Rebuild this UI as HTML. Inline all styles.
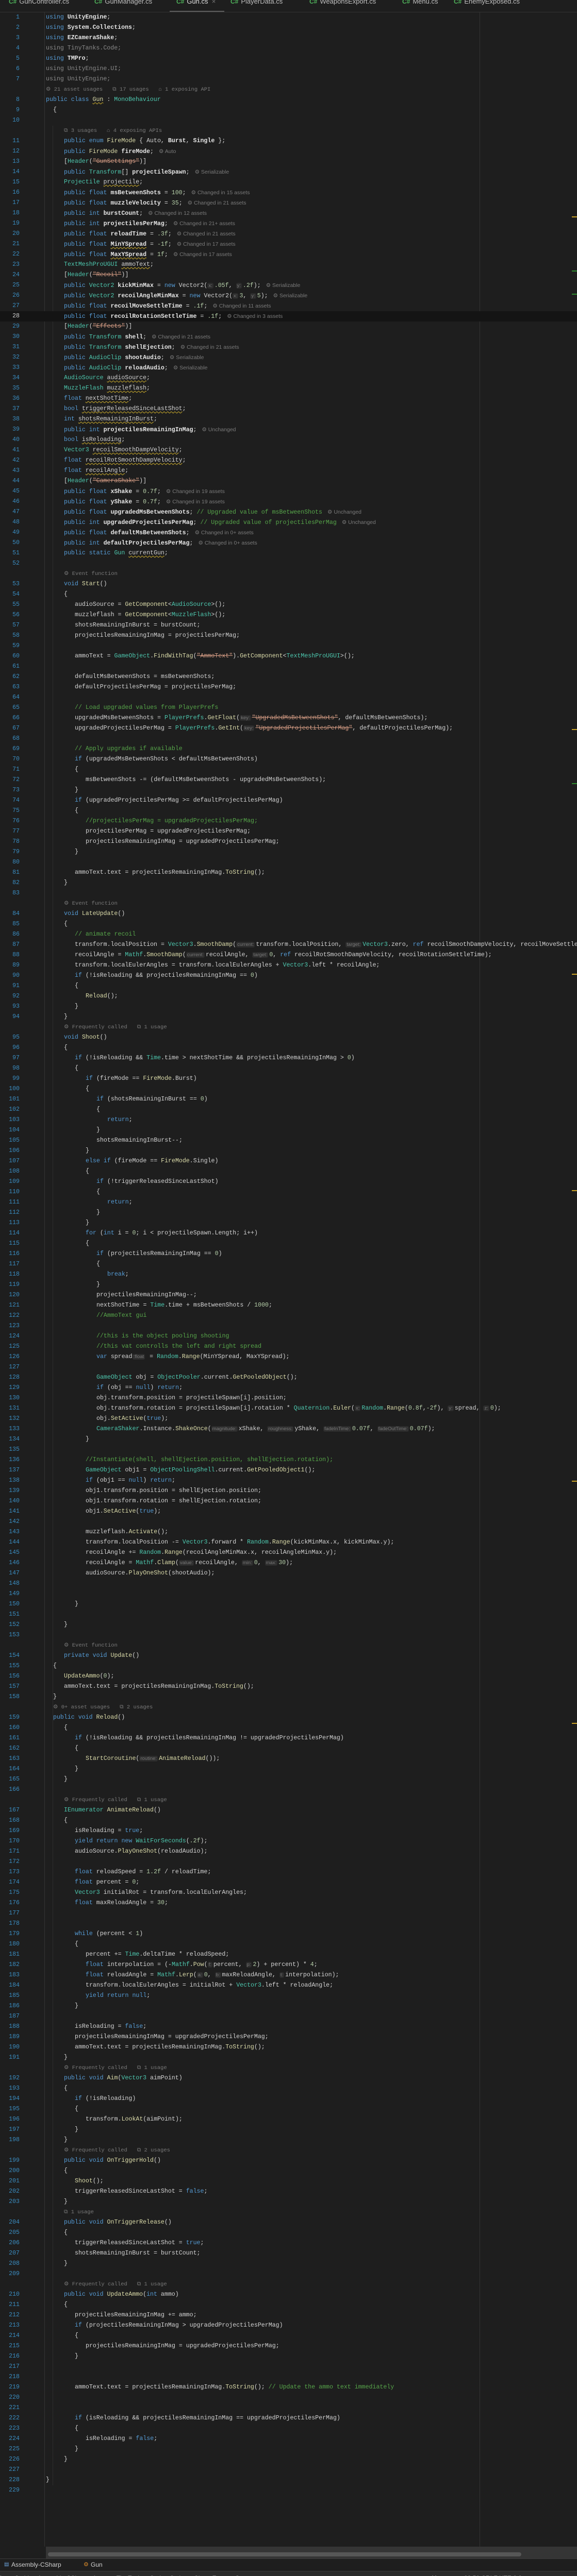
<!DOCTYPE html>
<html><head><meta charset="utf-8">
<style>
*{margin:0;padding:0;box-sizing:border-box}
html,body{width:1119px;height:5019px;background:#1e1e1e;overflow:hidden}
#root{position:relative;width:1119px;height:5019px;overflow:hidden;font-family:"Liberation Mono",monospace;font-size:11.6px;color:#d4d4d4;line-height:20px}
#tabs{position:absolute;left:0;top:0;width:1119px;height:24px;background:#1e1e1e;border-bottom:1px solid #333;font-family:"Liberation Sans",sans-serif;font-size:13px;color:#bfbfbf;overflow:hidden}
#tabs span{position:absolute;top:-7px;white-space:nowrap;line-height:20px}
#tabs span b{color:#4fb05a;font-weight:bold;font-size:12px;margin-right:5px}
#tabs .ul{position:absolute;left:329px;top:21px;width:106px;height:3px;background:#5c5c5c}
#ed{position:absolute;left:0;top:24px;width:1119px;height:4919px;overflow:hidden}
.r{position:relative;height:20px;line-height:20px;white-space:pre;overflow:hidden}
.r i{position:absolute;left:0;top:0;width:38px;text-align:right;font-style:normal;color:#3a8cc0}
.r code{position:absolute;top:0;font-family:inherit;white-space:pre;line-height:20px}
.L0{left:89px}.L1{left:103px}.L2{left:124px}.L3{left:145px}.L4{left:166px}.L5{left:187px}.L6{left:208px}
.cur{background:#141414}
k{color:#569cd6}t{color:#4ec9b0}m{color:#dcdcaa}s{color:#d69d85}c{color:#57a64a}n{color:#b5cea8}
b{color:#e6e6e6;font-weight:bold}
.dim{color:#8a8a8a}
h{font-family:"Liberation Sans",sans-serif;font-size:10.5px;color:#7a7a7a;margin-left:10px}
.hint{font-family:"Liberation Sans",sans-serif;font-size:10.5px;color:#7a7a7a}
em{font-style:normal;font-family:"Liberation Sans",sans-serif;font-size:9.5px;color:#777;background:#2d2d2d;border-radius:3px;padding:0 2px;margin-right:2px}
u{text-decoration:underline wavy #b59a2a;text-underline-offset:2px}
.vl{position:absolute;width:1px;background:#333}
#hs{position:absolute;left:89px;top:4943px;width:1030px;height:23px;background:#353535;overflow:hidden}
#hs div{position:absolute;left:4px;top:11px;width:918px;height:8px;border-radius:4px;background:#575757}
#asm{position:absolute;left:0;top:4966px;width:1119px;height:24px;background:#1e1e1e;border-top:1px solid #3a3a3a;font-family:"Liberation Sans",sans-serif;font-size:12px;color:#cfcfcf;line-height:22px;overflow:hidden}
#asm span{position:absolute;top:0}
#st{position:absolute;left:0;top:4990px;width:1119px;height:28px;background:#2b2b2b;border-top:1px solid #3a3a3a;font-family:"Liberation Sans",sans-serif;font-size:12px;color:#b0b0b0;line-height:26px;white-space:nowrap;overflow:hidden}
#st>span{position:absolute;top:0}
.mk{position:absolute;left:1109px;width:10px;height:2px}
</style></head><body><div id="root">
<div id="tabs">
<span style="left:17px"><b>C#</b>GunController.cs</span>
<span style="left:183px"><b>C#</b>GunManager.cs</span>
<span style="left:342px;color:#e0e0e0"><b>C#</b>Gun.cs&nbsp;&nbsp;<span style="position:static;color:#777">×</span></span>
<span style="left:447px"><b>C#</b>PlayerData.cs</span>
<span style="left:600px"><b>C#</b>WeaponsExport.cs</span>
<span style="left:780px"><b>C#</b>Menu.cs</span>
<span style="left:880px"><b>C#</b>EnemyExposed.cs</span>
<div class="ul"></div>
</div>
<div class="vl" style="left:86px;top:24px;height:4919px"></div>
<div class="vl" style="left:930px;top:24px;height:4919px"></div>
<div class="vl" style="left:102px;top:244px;height:4580px;background:#2e2e2e"></div>
<div id="ed">
<div class="r"><i>1</i><code class="L0"><k>using</k> <b>UnityEngine</b>;</code></div>
<div class="r"><i>2</i><code class="L0"><k>using</k> <b>System.Collections</b>;</code></div>
<div class="r"><i>3</i><code class="L0"><k>using</k> <b>EZCameraShake</b>;</code></div>
<div class="r"><i>4</i><code class="L0 dim">using TinyTanks.Code;</code></div>
<div class="r"><i>5</i><code class="L0"><k>using</k> <b>TMPro</b>;</code></div>
<div class="r"><i>6</i><code class="L0 dim">using UnityEngine.UI;</code></div>
<div class="r"><i>7</i><code class="L0 dim">using UnityEngine;</code></div>
<div class="r"><i></i><code class="L0 hint">⚙ 21 asset usages   ⧉ 17 usages   ⌂ 1 exposing API</code></div>
<div class="r"><i>8</i><code class="L0"><k>public</k> <k>class</k> <m><u>Gun</u></m> : <t>MonoBehaviour</t></code></div>
<div class="r"><i>9</i><code class="L1">{</code></div>
<div class="r"><i>10</i></div>
<div class="r"><i></i><code class="L2 hint">⧉ 3 usages   ⌂ 4 exposing APIs</code></div>
<div class="r"><i>11</i><code class="L2"><k>public</k> <k>enum</k> <m>FireMode</m> { Auto, <b>Burst</b>, <b>Single</b> };</code></div>
<div class="r"><i>12</i><code class="L2"><k>public</k> <m>FireMode</m> <b>fireMode</b>;<h>⚙ Auto</h></code></div>
<div class="r"><i>13</i><code class="L2">[<t>Header</t>(<s>"GunSettings"</s>)]</code></div>
<div class="r"><i>14</i><code class="L2"><k>public</k> <t>Transform</t>[] <b>projectileSpawn</b>;<h>⚙ Serializable</h></code></div>
<div class="r"><i>15</i><code class="L2"><t>Projectile</t> <u>projectile</u>;</code></div>
<div class="r"><i>16</i><code class="L2"><k>public</k> <k>float</k> <b>msBetweenShots</b> = <n>100</n>;<h>⚙ Changed in 15 assets</h></code></div>
<div class="r"><i>17</i><code class="L2"><k>public</k> <k>float</k> <b>muzzleVelocity</b> = <n>35</n>;<h>⚙ Changed in 21 assets</h></code></div>
<div class="r"><i>18</i><code class="L2"><k>public</k> <k>int</k> <b>burstCount</b>;<h>⚙ Changed in 12 assets</h></code></div>
<div class="r"><i>19</i><code class="L2"><k>public</k> <k>int</k> <b>projectilesPerMag</b>;<h>⚙ Changed in 21+ assets</h></code></div>
<div class="r"><i>20</i><code class="L2"><k>public</k> <k>float</k> <b>reloadTime</b> = <n>.3f</n>;<h>⚙ Changed in 21 assets</h></code></div>
<div class="r"><i>21</i><code class="L2"><k>public</k> <k>float</k> <b><u>MinYSpread</u></b> = <n>-1f</n>;<h>⚙ Changed in 17 assets</h></code></div>
<div class="r"><i>22</i><code class="L2"><k>public</k> <k>float</k> <b><u>MaxYSpread</u></b> = <n>1f</n>;<h>⚙ Changed in 17 assets</h></code></div>
<div class="r"><i>23</i><code class="L2"><t>TextMeshProUGUI</t> <u>ammoText</u>;</code></div>
<div class="r"><i>24</i><code class="L2">[<t>Header</t>(<s>"Recoil"</s>)]</code></div>
<div class="r"><i>25</i><code class="L2"><k>public</k> <t>Vector2</t> <b>kickMinMax</b> = <k>new</k> Vector2(<em>x:</em><n>.05f</n>, <em>y:</em><n>.2f</n>);<h>⚙ Serializable</h></code></div>
<div class="r"><i>26</i><code class="L2"><k>public</k> <t>Vector2</t> <b>recoilAngleMinMax</b> = <k>new</k> Vector2(<em>x:</em><n>3</n>, <em>y:</em><n>5</n>);<h>⚙ Serializable</h></code></div>
<div class="r"><i>27</i><code class="L2"><k>public</k> <k>float</k> <b>recoilMoveSettleTime</b> = <n>.1f</n>;<h>⚙ Changed in 11 assets</h></code></div>
<div class="r cur"><i style="color:#cfcfcf">28</i><code class="L2"><k>public</k> <k>float</k> <b>recoilRotationSettleTime</b> = <n>.1f</n>;<h>⚙ Changed in 3 assets</h></code></div>
<div class="r"><i>29</i><code class="L2">[<t>Header</t>(<s>"Effects"</s>)]</code></div>
<div class="r"><i>30</i><code class="L2"><k>public</k> <t>Transform</t> <b>shell</b>;<h>⚙ Changed in 21 assets</h></code></div>
<div class="r"><i>31</i><code class="L2"><k>public</k> <t>Transform</t> <b>shellEjection</b>;<h>⚙ Changed in 21 assets</h></code></div>
<div class="r"><i>32</i><code class="L2"><k>public</k> <t>AudioClip</t> <b>shootAudio</b>;<h>⚙ Serializable</h></code></div>
<div class="r"><i>33</i><code class="L2"><k>public</k> <t>AudioClip</t> <b>reloadAudio</b>;<h>⚙ Serializable</h></code></div>
<div class="r"><i>34</i><code class="L2"><t>AudioSource</t> <u>audioSource</u>;</code></div>
<div class="r"><i>35</i><code class="L2"><t>MuzzleFlash</t> <u>muzzleflash</u>;</code></div>
<div class="r"><i>36</i><code class="L2"><k>float</k> <u>nextShotTime</u>;</code></div>
<div class="r"><i>37</i><code class="L2"><k>bool</k> <u>triggerReleasedSinceLastShot</u>;</code></div>
<div class="r"><i>38</i><code class="L2"><k>int</k> <u>shotsRemainingInBurst</u>;</code></div>
<div class="r"><i>39</i><code class="L2"><k>public</k> <k>int</k> <b>projectilesRemainingInMag</b>;<h>⚙ Unchanged</h></code></div>
<div class="r"><i>40</i><code class="L2"><k>bool</k> <u>isReloading</u>;</code></div>
<div class="r"><i>41</i><code class="L2"><t>Vector3</t> <u>recoilSmoothDampVelocity</u>;</code></div>
<div class="r"><i>42</i><code class="L2"><k>float</k> <u>recoilRotSmoothDampVelocity</u>;</code></div>
<div class="r"><i>43</i><code class="L2"><k>float</k> <u>recoilAngle</u>;</code></div>
<div class="r"><i>44</i><code class="L2">[<t>Header</t>(<s>"CameraShake"</s>)]</code></div>
<div class="r"><i>45</i><code class="L2"><k>public</k> <k>float</k> <b>xShake</b> = <n>0.7f</n>;<h>⚙ Changed in 19 assets</h></code></div>
<div class="r"><i>46</i><code class="L2"><k>public</k> <k>float</k> <b>yShake</b> = <n>0.7f</n>;<h>⚙ Changed in 19 assets</h></code></div>
<div class="r"><i>47</i><code class="L2"><k>public</k> <k>float</k> <b>upgradedMsBetweenShots</b>; <c>// Upgraded value of msBetweenShots</c><h>⚙ Unchanged</h></code></div>
<div class="r"><i>48</i><code class="L2"><k>public</k> <k>int</k> <b>upgradedProjectilesPerMag</b>; <c>// Upgraded value of projectilesPerMag</c><h>⚙ Unchanged</h></code></div>
<div class="r"><i>49</i><code class="L2"><k>public</k> <k>float</k> <b>defaultMsBetweenShots</b>;<h>⚙ Changed in 0+ assets</h></code></div>
<div class="r"><i>50</i><code class="L2"><k>public</k> <k>int</k> <b>defaultProjectilesPerMag</b>;<h>⚙ Changed in 0+ assets</h></code></div>
<div class="r"><i>51</i><code class="L2"><k>public</k> <k>static</k> <t>Gun</t> <u>currentGun</u>;</code></div>
<div class="r"><i>52</i></div>
<div class="r"><i></i><code class="L2 hint">⚙ Event function</code></div>
<div class="r"><i>53</i><code class="L2"><k>void</k> <m>Start</m>()</code></div>
<div class="r"><i>54</i><code class="L2">{</code></div>
<div class="r"><i>55</i><code class="L3">audioSource = <m>GetComponent</m>&lt;<t>AudioSource</t>&gt;();</code></div>
<div class="r"><i>56</i><code class="L3">muzzleflash = <m>GetComponent</m>&lt;<t>MuzzleFlash</t>&gt;();</code></div>
<div class="r"><i>57</i><code class="L3">shotsRemainingInBurst = burstCount;</code></div>
<div class="r"><i>58</i><code class="L3">projectilesRemainingInMag = projectilesPerMag;</code></div>
<div class="r"><i>59</i></div>
<div class="r"><i>60</i><code class="L3">ammoText = <t>GameObject</t>.<m>FindWithTag</m>(<s>"AmmoText"</s>).<m>GetComponent</m>&lt;<t>TextMeshProUGUI</t>&gt;();</code></div>
<div class="r"><i>61</i></div>
<div class="r"><i>62</i><code class="L3">defaultMsBetweenShots = msBetweenShots;</code></div>
<div class="r"><i>63</i><code class="L3">defaultProjectilesPerMag = projectilesPerMag;</code></div>
<div class="r"><i>64</i></div>
<div class="r"><i>65</i><code class="L3"><c>// Load upgraded values from PlayerPrefs</c></code></div>
<div class="r"><i>66</i><code class="L3">upgradedMsBetweenShots = <t>PlayerPrefs</t>.<m>GetFloat</m>(<em>key:</em><s>"UpgradedMsBetweenShots"</s>, defaultMsBetweenShots);</code></div>
<div class="r"><i>67</i><code class="L3">upgradedProjectilesPerMag = <t>PlayerPrefs</t>.<m>GetInt</m>(<em>key:</em><s>"UpgradedProjectilesPerMag"</s>, defaultProjectilesPerMag);</code></div>
<div class="r"><i>68</i></div>
<div class="r"><i>69</i><code class="L3"><c>// Apply upgrades if available</c></code></div>
<div class="r"><i>70</i><code class="L3"><k>if</k> (upgradedMsBetweenShots &lt; defaultMsBetweenShots)</code></div>
<div class="r"><i>71</i><code class="L3">{</code></div>
<div class="r"><i>72</i><code class="L4">msBetweenShots -= (defaultMsBetweenShots - upgradedMsBetweenShots);</code></div>
<div class="r"><i>73</i><code class="L3">}</code></div>
<div class="r"><i>74</i><code class="L3"><k>if</k> (upgradedProjectilesPerMag &gt;= defaultProjectilesPerMag)</code></div>
<div class="r"><i>75</i><code class="L3">{</code></div>
<div class="r"><i>76</i><code class="L4"><c>//projectilesPerMag = upgradedProjectilesPerMag;</c></code></div>
<div class="r"><i>77</i><code class="L4">projectilesPerMag = upgradedProjectilesPerMag;</code></div>
<div class="r"><i>78</i><code class="L4">projectilesRemainingInMag = upgradedProjectilesPerMag;</code></div>
<div class="r"><i>79</i><code class="L3">}</code></div>
<div class="r"><i>80</i></div>
<div class="r"><i>81</i><code class="L3">ammoText.text = projectilesRemainingInMag.<m>ToString</m>();</code></div>
<div class="r"><i>82</i><code class="L2">}</code></div>
<div class="r"><i>83</i></div>
<div class="r"><i></i><code class="L2 hint">⚙ Event function</code></div>
<div class="r"><i>84</i><code class="L2"><k>void</k> <m>LateUpdate</m>()</code></div>
<div class="r"><i>85</i><code class="L2">{</code></div>
<div class="r"><i>86</i><code class="L3"><c>// animate recoil</c></code></div>
<div class="r"><i>87</i><code class="L3">transform.localPosition = <t>Vector3</t>.<m>SmoothDamp</m>(<em>current:</em>transform.localPosition, <em>target:</em><t>Vector3</t>.zero, <k>ref</k> recoilSmoothDampVelocity, recoilMoveSettleTime);</code></div>
<div class="r"><i>88</i><code class="L3">recoilAngle = <t>Mathf</t>.<m>SmoothDamp</m>(<em>current:</em>recoilAngle, <em>target:</em><n>0</n>, <k>ref</k> recoilRotSmoothDampVelocity, recoilRotationSettleTime);</code></div>
<div class="r"><i>89</i><code class="L3">transform.localEulerAngles = transform.localEulerAngles + <t>Vector3</t>.left * recoilAngle;</code></div>
<div class="r"><i>90</i><code class="L3"><k>if</k> (!isReloading &amp;&amp; projectilesRemainingInMag == <n>0</n>)</code></div>
<div class="r"><i>91</i><code class="L3">{</code></div>
<div class="r"><i>92</i><code class="L4"><m>Reload</m>();</code></div>
<div class="r"><i>93</i><code class="L3">}</code></div>
<div class="r"><i>94</i><code class="L2">}</code></div>
<div class="r"><i></i><code class="L2 hint">⚙ Frequently called   ⧉ 1 usage</code></div>
<div class="r"><i>95</i><code class="L2"><k>void</k> <m>Shoot</m>()</code></div>
<div class="r"><i>96</i><code class="L2">{</code></div>
<div class="r"><i>97</i><code class="L3"><k>if</k> (!isReloading &amp;&amp; <t>Time</t>.time &gt; nextShotTime &amp;&amp; projectilesRemainingInMag &gt; <n>0</n>)</code></div>
<div class="r"><i>98</i><code class="L3">{</code></div>
<div class="r"><i>99</i><code class="L4"><k>if</k> (fireMode == <m>FireMode</m>.Burst)</code></div>
<div class="r"><i>100</i><code class="L4">{</code></div>
<div class="r"><i>101</i><code class="L5"><k>if</k> (shotsRemainingInBurst == <n>0</n>)</code></div>
<div class="r"><i>102</i><code class="L5">{</code></div>
<div class="r"><i>103</i><code class="L6"><k>return</k>;</code></div>
<div class="r"><i>104</i><code class="L5">}</code></div>
<div class="r"><i>105</i><code class="L5">shotsRemainingInBurst--;</code></div>
<div class="r"><i>106</i><code class="L4">}</code></div>
<div class="r"><i>107</i><code class="L4"><k>else if</k> (fireMode == <m>FireMode</m>.Single)</code></div>
<div class="r"><i>108</i><code class="L4">{</code></div>
<div class="r"><i>109</i><code class="L5"><k>if</k> (!triggerReleasedSinceLastShot)</code></div>
<div class="r"><i>110</i><code class="L5">{</code></div>
<div class="r"><i>111</i><code class="L6"><k>return</k>;</code></div>
<div class="r"><i>112</i><code class="L5">}</code></div>
<div class="r"><i>113</i><code class="L4">}</code></div>
<div class="r"><i>114</i><code class="L4"><k>for</k> (<k>int</k> i = <n>0</n>; i &lt; projectileSpawn.Length; i++)</code></div>
<div class="r"><i>115</i><code class="L4">{</code></div>
<div class="r"><i>116</i><code class="L5"><k>if</k> (projectilesRemainingInMag == <n>0</n>)</code></div>
<div class="r"><i>117</i><code class="L5">{</code></div>
<div class="r"><i>118</i><code class="L6"><k>break</k>;</code></div>
<div class="r"><i>119</i><code class="L5">}</code></div>
<div class="r"><i>120</i><code class="L5">projectilesRemainingInMag--;</code></div>
<div class="r"><i>121</i><code class="L5">nextShotTime = <t>Time</t>.time + msBetweenShots / <n>1000</n>;</code></div>
<div class="r"><i>122</i><code class="L5"><c>//AmmoText gui</c></code></div>
<div class="r"><i>123</i></div>
<div class="r"><i>124</i><code class="L5"><c>//this is the object pooling shooting</c></code></div>
<div class="r"><i>125</i><code class="L5"><c>//this vat controlls the left and right spread</c></code></div>
<div class="r"><i>126</i><code class="L5"><k>var</k> spread<em>:float</em> = <t>Random</t>.<m>Range</m>(MinYSpread, MaxYSpread);</code></div>
<div class="r"><i>127</i></div>
<div class="r"><i>128</i><code class="L5"><t>GameObject</t> obj = <t>ObjectPooler</t>.current.<m>GetPooledObject</m>();</code></div>
<div class="r"><i>129</i><code class="L5"><k>if</k> (obj == <k>null</k>) <k>return</k>;</code></div>
<div class="r"><i>130</i><code class="L5">obj.transform.position = projectileSpawn[i].position;</code></div>
<div class="r"><i>131</i><code class="L5">obj.transform.rotation = projectileSpawn[i].rotation * <t>Quaternion</t>.<m>Euler</m>(<em>x:</em><t>Random</t>.<m>Range</m>(<n>0.8f</n>,<n>-2f</n>), <em>y:</em>spread, <em>z:</em><n>0</n>);</code></div>
<div class="r"><i>132</i><code class="L5">obj.<m>SetActive</m>(<k>true</k>);</code></div>
<div class="r"><i>133</i><code class="L5"><t>CameraShaker</t>.Instance.<m>ShakeOnce</m>(<em>magnitude:</em>xShake, <em>roughness:</em>yShake, <em>fadeInTime:</em><n>0.07f</n>, <em>fadeOutTime:</em><n>0.07f</n>);</code></div>
<div class="r"><i>134</i><code class="L4">}</code></div>
<div class="r"><i>135</i></div>
<div class="r"><i>136</i><code class="L4"><c>//Instantiate(shell, shellEjection.position, shellEjection.rotation);</c></code></div>
<div class="r"><i>137</i><code class="L4"><t>GameObject</t> obj1 = <t>ObjectPoolingShell</t>.current.<m>GetPooledObject1</m>();</code></div>
<div class="r"><i>138</i><code class="L4"><k>if</k> (obj1 == <k>null</k>) <k>return</k>;</code></div>
<div class="r"><i>139</i><code class="L4">obj1.transform.position = shellEjection.position;</code></div>
<div class="r"><i>140</i><code class="L4">obj1.transform.rotation = shellEjection.rotation;</code></div>
<div class="r"><i>141</i><code class="L4">obj1.<m>SetActive</m>(<k>true</k>);</code></div>
<div class="r"><i>142</i></div>
<div class="r"><i>143</i><code class="L4">muzzleflash.<m>Activate</m>();</code></div>
<div class="r"><i>144</i><code class="L4">transform.localPosition -= <t>Vector3</t>.forward * <t>Random</t>.<m>Range</m>(kickMinMax.x, kickMinMax.y);</code></div>
<div class="r"><i>145</i><code class="L4">recoilAngle += <t>Random</t>.<m>Range</m>(recoilAngleMinMax.x, recoilAngleMinMax.y);</code></div>
<div class="r"><i>146</i><code class="L4">recoilAngle = <t>Mathf</t>.<m>Clamp</m>(<em>value:</em>recoilAngle, <em>min:</em><n>0</n>, <em>max:</em><n>30</n>);</code></div>
<div class="r"><i>147</i><code class="L4">audioSource.<m>PlayOneShot</m>(shootAudio);</code></div>
<div class="r"><i>148</i></div>
<div class="r"><i>149</i></div>
<div class="r"><i>150</i><code class="L3">}</code></div>
<div class="r"><i>151</i></div>
<div class="r"><i>152</i><code class="L2">}</code></div>
<div class="r"><i>153</i></div>
<div class="r"><i></i><code class="L2 hint">⚙ Event function</code></div>
<div class="r"><i>154</i><code class="L2"><k>private</k> <k>void</k> <m>Update</m>()</code></div>
<div class="r"><i>155</i><code class="L1">{</code></div>
<div class="r"><i>156</i><code class="L2"><m>UpdateAmmo</m>(<n>0</n>);</code></div>
<div class="r"><i>157</i><code class="L2">ammoText.text = projectilesRemainingInMag.<m>ToString</m>();</code></div>
<div class="r"><i>158</i><code class="L1">}</code></div>
<div class="r"><i></i><code class="L1 hint">⚙ 0+ asset usages   ⧉ 2 usages</code></div>
<div class="r"><i>159</i><code class="L1"><k>public</k> <k>void</k> <m>Reload</m>()</code></div>
<div class="r"><i>160</i><code class="L2">{</code></div>
<div class="r"><i>161</i><code class="L3"><k>if</k> (!isReloading &amp;&amp; projectilesRemainingInMag != upgradedProjectilesPerMag)</code></div>
<div class="r"><i>162</i><code class="L3">{</code></div>
<div class="r"><i>163</i><code class="L4"><m>StartCoroutine</m>(<em>routine:</em><m>AnimateReload</m>());</code></div>
<div class="r"><i>164</i><code class="L3">}</code></div>
<div class="r"><i>165</i><code class="L2">}</code></div>
<div class="r"><i>166</i></div>
<div class="r"><i></i><code class="L2 hint">⚙ Frequently called   ⧉ 1 usage</code></div>
<div class="r"><i>167</i><code class="L2"><t>IEnumerator</t> <m>AnimateReload</m>()</code></div>
<div class="r"><i>168</i><code class="L2">{</code></div>
<div class="r"><i>169</i><code class="L3">isReloading = <k>true</k>;</code></div>
<div class="r"><i>170</i><code class="L3"><k>yield return new</k> <t>WaitForSeconds</t>(<n>.2f</n>);</code></div>
<div class="r"><i>171</i><code class="L3">audioSource.<m>PlayOneShot</m>(reloadAudio);</code></div>
<div class="r"><i>172</i></div>
<div class="r"><i>173</i><code class="L3"><k>float</k> reloadSpeed = <n>1.2f</n> / reloadTime;</code></div>
<div class="r"><i>174</i><code class="L3"><k>float</k> percent = <n>0</n>;</code></div>
<div class="r"><i>175</i><code class="L3"><t>Vector3</t> initialRot = transform.localEulerAngles;</code></div>
<div class="r"><i>176</i><code class="L3"><k>float</k> maxReloadAngle = <n>30</n>;</code></div>
<div class="r"><i>177</i></div>
<div class="r"><i>178</i></div>
<div class="r"><i>179</i><code class="L3"><k>while</k> (percent &lt; <n>1</n>)</code></div>
<div class="r"><i>180</i><code class="L3">{</code></div>
<div class="r"><i>181</i><code class="L4">percent += <t>Time</t>.deltaTime * reloadSpeed;</code></div>
<div class="r"><i>182</i><code class="L4"><k>float</k> interpolation = (-<t>Mathf</t>.<m>Pow</m>(<em>f:</em>percent, <em>p:</em><n>2</n>) + percent) * <n>4</n>;</code></div>
<div class="r"><i>183</i><code class="L4"><k>float</k> reloadAngle = <t>Mathf</t>.<m>Lerp</m>(<em>a:</em><n>0</n>, <em>b:</em>maxReloadAngle, <em>t:</em>interpolation);</code></div>
<div class="r"><i>184</i><code class="L4">transform.localEulerAngles = initialRot + <t>Vector3</t>.left * reloadAngle;</code></div>
<div class="r"><i>185</i><code class="L4"><k>yield return null</k>;</code></div>
<div class="r"><i>186</i><code class="L3">}</code></div>
<div class="r"><i>187</i></div>
<div class="r"><i>188</i><code class="L3">isReloading = <k>false</k>;</code></div>
<div class="r"><i>189</i><code class="L3">projectilesRemainingInMag = upgradedProjectilesPerMag;</code></div>
<div class="r"><i>190</i><code class="L3">ammoText.text = projectilesRemainingInMag.<m>ToString</m>();</code></div>
<div class="r"><i>191</i><code class="L2">}</code></div>
<div class="r"><i></i><code class="L2 hint">⚙ Frequently called   ⧉ 1 usage</code></div>
<div class="r"><i>192</i><code class="L2"><k>public</k> <k>void</k> <m>Aim</m>(<t>Vector3</t> aimPoint)</code></div>
<div class="r"><i>193</i><code class="L2">{</code></div>
<div class="r"><i>194</i><code class="L3"><k>if</k> (!isReloading)</code></div>
<div class="r"><i>195</i><code class="L3">{</code></div>
<div class="r"><i>196</i><code class="L4">transform.<m>LookAt</m>(aimPoint);</code></div>
<div class="r"><i>197</i><code class="L3">}</code></div>
<div class="r"><i>198</i><code class="L2">}</code></div>
<div class="r"><i></i><code class="L2 hint">⚙ Frequently called   ⧉ 2 usages</code></div>
<div class="r"><i>199</i><code class="L2"><k>public</k> <k>void</k> <m>OnTriggerHold</m>()</code></div>
<div class="r"><i>200</i><code class="L2">{</code></div>
<div class="r"><i>201</i><code class="L3"><m>Shoot</m>();</code></div>
<div class="r"><i>202</i><code class="L3">triggerReleasedSinceLastShot = <k>false</k>;</code></div>
<div class="r"><i>203</i><code class="L2">}</code></div>
<div class="r"><i></i><code class="L2 hint">⧉ 1 usage</code></div>
<div class="r"><i>204</i><code class="L2"><k>public</k> <k>void</k> <m>OnTriggerRelease</m>()</code></div>
<div class="r"><i>205</i><code class="L2">{</code></div>
<div class="r"><i>206</i><code class="L3">triggerReleasedSinceLastShot = <k>true</k>;</code></div>
<div class="r"><i>207</i><code class="L3">shotsRemainingInBurst = burstCount;</code></div>
<div class="r"><i>208</i><code class="L2">}</code></div>
<div class="r"><i>209</i></div>
<div class="r"><i></i><code class="L2 hint">⚙ Frequently called   ⧉ 1 usage</code></div>
<div class="r"><i>210</i><code class="L2"><k>public</k> <k>void</k> <m>UpdateAmmo</m>(<k>int</k> ammo)</code></div>
<div class="r"><i>211</i><code class="L2">{</code></div>
<div class="r"><i>212</i><code class="L3">projectilesRemainingInMag += ammo;</code></div>
<div class="r"><i>213</i><code class="L3"><k>if</k> (projectilesRemainingInMag &gt; upgradedProjectilesPerMag)</code></div>
<div class="r"><i>214</i><code class="L3">{</code></div>
<div class="r"><i>215</i><code class="L4">projectilesRemainingInMag = upgradedProjectilesPerMag;</code></div>
<div class="r"><i>216</i><code class="L3">}</code></div>
<div class="r"><i>217</i></div>
<div class="r"><i>218</i></div>
<div class="r"><i>219</i><code class="L3">ammoText.text = projectilesRemainingInMag.<m>ToString</m>(); <c>// Update the ammo text immediately</c></code></div>
<div class="r"><i>220</i></div>
<div class="r"><i>221</i></div>
<div class="r"><i>222</i><code class="L3"><k>if</k> (isReloading &amp;&amp; projectilesRemainingInMag == upgradedProjectilesPerMag)</code></div>
<div class="r"><i>223</i><code class="L3">{</code></div>
<div class="r"><i>224</i><code class="L4">isReloading = <k>false</k>;</code></div>
<div class="r"><i>225</i><code class="L3">}</code></div>
<div class="r"><i>226</i><code class="L2">}</code></div>
<div class="r"><i>227</i></div>
<div class="r"><i>228</i><code class="L0">}</code></div>
<div class="r"><i>229</i></div>
</div>
<div class="mk" style="top:420px;background:#c9a227"></div>
<div class="mk" style="top:525px;background:#2e8b2e"></div>
<div class="mk" style="top:570px;background:#2e8b2e"></div>
<div class="mk" style="top:1415px;background:#c9a227"></div>
<div class="mk" style="top:1520px;background:#2e8b2e"></div>
<div class="mk" style="top:1890px;background:#c9a227"></div>
<div class="mk" style="top:2310px;background:#c9a227"></div>
<div class="mk" style="top:2874px;background:#c9a227"></div>
<div class="mk" style="top:3344px;background:#c9a227"></div>
<div id="hs"><div></div></div>
<div id="asm"><span style="left:8px;color:#6aa0d8;font-size:10px">▤</span><span style="left:22px">Assembly-CSharp</span><span style="left:162px;color:#d88a2a;font-size:11px">⚙</span><span style="left:176px">Gun</span></div>
<div id="st"><span style="left:-4px">GameStable  ›  Assembly-CSharp  ›  Assets  ›  TinyTanks  ›  Code  ›  Scripts  ›  Shoot Etc  ›  <b style="color:#4fb05a;font-size:10px">C#</b> Gun.cs</span><span style="left:805px;color:#4fb05a;font-size:11px">✓</span><span style="left:838px;font-weight:bold;color:#bbb">V</span><span style="left:870px;color:#3bb06a;font-size:10px">▼</span><span style="left:900px">28:50   CRLF   UTF-8   3 spaces</span></div>
</div></body></html>
